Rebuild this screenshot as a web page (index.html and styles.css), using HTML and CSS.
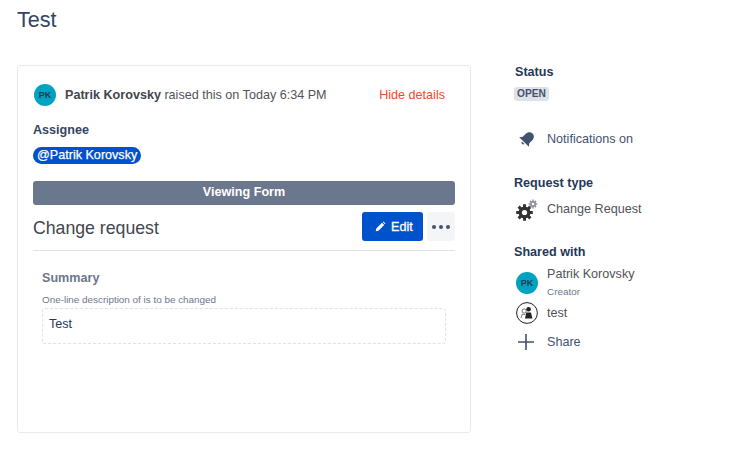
FILE: index.html
```html
<!DOCTYPE html>
<html lang="en">
<head>
<meta charset="utf-8">
<title>Test</title>
<link rel="stylesheet" href="styles.css">
</head>
<body>
<h1 class="title">Test</h1>
<div class="layout">
  <main class="card">
    <div class="raised">
      <span class="avatar avatar-small">PK</span>
      <span class="raised-text"><strong>Patrik Korovsky</strong> raised this on Today 6:34 PM</span>
      <a class="hide-link">Hide details</a>
    </div>
    <div class="assignee-label">Assignee</div>
    <div class="mention-row"><span class="mention">@Patrik Korovsky</span></div>
    <div class="viewing">Viewing Form</div>
    <div class="form-head">
      <h2 class="form-title">Change request</h2>
      <button class="edit-btn">
        <svg class="pencil" viewBox="0 0 12 12" width="11" height="11"><path d="M0.8 11.2 L1.4 8.2 L7.6 2 L10 4.4 L3.8 10.6 Z M8.4 1.2 L9.2 0.6 L11.4 2.8 L10.8 3.6 Z" fill="#fff"/></svg>
        Edit
      </button>
      <button class="more-btn"><i></i><i></i><i></i></button>
    </div>
    <section class="field">
      <div class="field-label">Summary</div>
      <div class="field-help">One-line description of is to be changed</div>
      <div class="field-value">Test</div>
    </section>
  </main>
  <aside class="side">
    <div class="side-heading status-heading">Status</div>
    <span class="lozenge">OPEN</span>
    <div class="side-row notif">
      <span class="side-icon">
        <svg viewBox="0 0 20 20" width="20" height="20"><g transform="rotate(45 10 10)"><path d="M10 2.2 C7 2.2 5.4 4.6 5.4 7.4 L5.4 11.4 L3.2 14.2 L16.8 14.2 L14.6 11.4 L14.6 7.4 C14.6 4.6 13 2.2 10 2.2 Z" fill="#42526e"/><path d="M8.2 15.4 L11.8 15.4 C11.6 17.6 8.4 17.6 8.2 15.4 Z" fill="#42526e"/></g></svg>
      </span>
      <span class="notif-text">Notifications on</span>
    </div>
    <div class="side-heading type-heading">Request type</div>
    <div class="side-row type-row">
      <span class="side-icon gear-icon">
        <svg viewBox="0 0 23 23" width="23" height="23">
          <circle cx="9.5" cy="13.5" r="6" fill="#333"/>
          <path d="M9.5 5.2V21.8M1.2 13.5H17.8M3.6 7.6L15.4 19.4M15.4 7.6L3.6 19.4" stroke="#333" stroke-width="3"/>
          <circle cx="9.5" cy="13.5" r="2.6" fill="#fff"/>
          <path d="M18 .6V9.4M13.6 5H22.4M14.9 1.9L21.1 8.1M21.1 1.9L14.9 8.1" stroke="#8f949c" stroke-width="1.5"/>
          <circle cx="18" cy="5" r="3" fill="#8f949c"/>
          <circle cx="18" cy="5" r="1.3" fill="#fff"/>
        </svg>
      </span>
      <span class="type-text">Change Request</span>
    </div>
    <div class="side-heading shared-heading">Shared with</div>
    <div class="person">
      <span class="avatar avatar-large">PK</span>
      <div class="person-text">
        <div class="person-name">Patrik Korovsky</div>
        <div class="person-role">Creator</div>
      </div>
    </div>
    <div class="org">
      <span class="org-icon">
        <svg viewBox="0 0 22 22" width="22" height="22">
          <circle cx="11" cy="11" r="10.4" fill="#fff" stroke="#222" stroke-width="1"/>
          <circle cx="8.2" cy="9" r="2.1" fill="none" stroke="#555" stroke-width=".8"/>
          <path d="M5 16 L6.2 12.4 L9 12.4" fill="none" stroke="#555" stroke-width=".8"/>
          <circle cx="12.6" cy="7.2" r="2.3" fill="#222"/>
          <path d="M9 16.6 L10.2 10.4 L15 10.4 L16.4 16.6 Z" fill="#222"/>
        </svg>
      </span>
      <span class="org-name">test</span>
    </div>
    <div class="share">
      <svg class="plus" viewBox="0 0 16 16" width="16" height="16"><path d="M8 0V16M0 8H16" stroke="#42526e" stroke-width="1.6"/></svg>
      <span class="share-text">Share</span>
    </div>
  </aside>
</div>
</body>
</html>
```

FILE: styles.css
```css
* { box-sizing: border-box; }
html, body { margin: 0; padding: 0; }
body {
  width: 742px;
  height: 451px;
  overflow: hidden;
  background: #fff;
  font-family: "Liberation Sans", Arial, sans-serif;
  font-size: 12.6px;
  line-height: 20px;
  color: #333;
}
.title {
  margin: 0;
  padding: 6px 0 0 17px;
  height: 65px;
  font-size: 21.6px;
  line-height: 28px;
  font-weight: 400;
  color: #344563;
}
.layout { display: flex; align-items: flex-start; }
.card {
  width: 454px;
  height: 368px;
  margin-left: 17px;
  padding: 17px 15px 0;
  border: 1px solid #e9eaec;
  border-radius: 3px;
}
.raised { display: flex; align-items: center; height: 24px; }
.avatar {
  display: inline-flex;
  align-items: center;
  justify-content: center;
  flex: none;
  border-radius: 50%;
  background: #00a3bf;
  color: #253858;
  font-weight: 700;
}
.avatar-small { width: 22px; height: 22px; font-size: 9px; margin-left: 1px; }
.raised-text { margin-left: 9px; color: #505359; }
.raised-text strong { font-weight: 700; color: #42464d; }
.hide-link { margin-left: auto; margin-right: 10px; color: #ef4a25; }
.assignee-label { margin-top: 13px; font-weight: 700; color: #344563; }
.mention-row { margin-top: 7px; height: 17px; display: flex; }
.mention {
  background: #0052cc;
  color: #fff;
  border-radius: 9px;
  padding: 0 4px;
  line-height: 17px;
  -webkit-text-stroke: 0.25px #fff;
}
.viewing {
  margin-top: 17px;
  height: 24px;
  line-height: 22px;
  background: #6b778c;
  border-radius: 3px;
  color: #fff;
  text-align: center;
  font-weight: 700;
}
.form-head {
  display: flex;
  align-items: center;
  margin-top: 7px;
  padding-bottom: 9px;
  height: 39px;
  border-bottom: 1px solid #dfe1e6;
}
.form-title { margin: 3px auto 0 0; font-size: 17.7px; font-weight: 400; line-height: 30px; color: #42464d; }
.edit-btn {
  display: flex;
  align-items: center;
  gap: 5px;
  width: 61px;
  height: 29px;
  padding: 0 0 0 13px;
  border: 0;
  border-radius: 3px;
  background: #0052cc;
  color: #fff;
  font: 400 12.6px "Liberation Sans", sans-serif;
  -webkit-text-stroke: 0.3px #fff;
}
.more-btn {
  display: flex;
  align-items: center;
  justify-content: center;
  gap: 3px;
  width: 28px;
  height: 29px;
  margin-left: 4px;
  padding: 0;
  border: 0;
  border-radius: 3px;
  background: #f4f5f7;
}
.more-btn i { width: 4px; height: 4px; border-radius: 50%; background: #42526e; }
.field { padding: 17px 9px 0; }
.field-label { font-weight: 700; color: #6b778c; }
.field-help { margin-top: 4px; font-size: 9.9px; line-height: 16px; color: #6b778c; }
.field-value {
  height: 36px;
  padding: 5px 6px;
  border: 1px dashed #dfe1e6;
  border-radius: 3px;
  color: #253858;
}
.side { margin-left: 43px; width: 200px; }
.side-heading { font-weight: 700; color: #253858; }
.status-heading { margin-top: -3px; margin-left: 1px; }
.lozenge {
  display: inline-block;
  margin-top: 5px;
  padding: 0 3px;
  height: 14px;
  line-height: 14px;
  background: #dfe1e6;
  border-radius: 3px;
  color: #42526e;
  font-size: 10.2px;
  font-weight: 700;
  vertical-align: top;
}
.side-row { display: flex; }
.side-icon { flex: none; width: 33px; display: flex; }
.notif { margin-top: 27px; align-items: center; height: 20px; }
.notif .side-icon { padding-left: 3px; }
.notif-text { color: #42526e; }
.type-heading { margin-top: 24px; }
.type-row { margin-top: 7px; height: 24px; }
.gear-icon { padding-left: 1px; margin-top: -1px; }
.type-text { color: #505359; margin-top: -1px; }
.shared-heading { margin-top: 18px; }
.person { display: flex; align-items: center; margin-top: 3px; height: 36px; }
.avatar-large { width: 22px; height: 22px; font-size: 9px; margin-left: 2px; }
.person-text { margin-left: 9px; }
.person-name { color: #505359; line-height: 18px; }
.person-role { font-size: 9.9px; line-height: 18px; color: #6b778c; }
.org { display: flex; align-items: center; height: 24px; }
.org-icon { display: flex; margin-left: 2px; }
.org-name { margin-left: 9px; color: #505359; }
.share { display: flex; align-items: center; margin-top: 5px; height: 24px; }
.plus { margin-left: 4px; }
.share-text { margin-left: 13px; color: #42526e; }
```
